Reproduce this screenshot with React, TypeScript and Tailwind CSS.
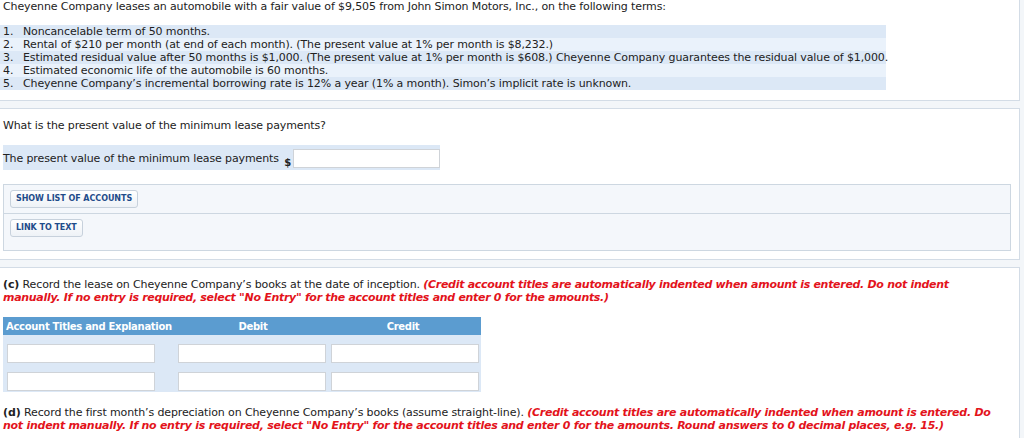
import React from "react";

const terms = [
  "Noncancelable term of 50 months.",
  "Rental of $210 per month (at end of each month). (The present value at 1% per month is $8,232.)",
  "Estimated residual value after 50 months is $1,000. (The present value at 1% per month is $608.) Cheyenne Company guarantees the residual value of $1,000.",
  "Estimated economic life of the automobile is 60 months.",
  "Cheyenne Company\u2019s incremental borrowing rate is 12% a year (1% a month). Simon\u2019s implicit rate is unknown.",
];

function Btn({ children }: { children: React.ReactNode }) {
  return (
    <button className="h-[18px] px-[5px] rounded-[3px] border border-[#c7d1dc] bg-gradient-to-b from-white to-[#eef2f7] text-[8px] font-bold text-[#1f4c8a] leading-none tracking-[-0.05px] whitespace-nowrap">
      {children}
    </button>
  );
}

function Box() {
  return <div className="h-[19px] w-[148px] bg-white border border-[#cfd3d8]" />;
}

export default function App() {
  return (
    <div className="w-[1024px] h-[438px] overflow-hidden bg-[#f3f6f9] font-['DejaVu_Sans',Verdana,sans-serif] text-[11px] text-[#222] leading-[13px] tracking-[-0.12px]">
      <div className="w-[1020px] flex flex-col gap-[7px]">
        {/* card 1 */}
        <div className="h-[101px] bg-white border-r border-b border-[#d3dce6]">
          <p className="px-[3px] pt-0 whitespace-nowrap">
            Cheyenne Company leases an automobile with a fair value of $9,505 from John Simon Motors, Inc., on the following terms:
          </p>
          <div className="mt-[12px] w-[886px]">
            {terms.map((t, i) => (
              <div
                key={i}
                className={`h-[13px] flex whitespace-nowrap ${i % 2 === 0 ? "bg-[#dce8f6]" : "bg-[#eaf2fb]"}`}
              >
                <span className="w-[23px] pl-[3px] shrink-0">{i + 1}.</span>
                <span>{t}</span>
              </div>
            ))}
          </div>
        </div>

        {/* card 2 */}
        <div className="h-[152px] bg-white border-r border-y border-[#d3dce6] pt-[10px]">
          <p className="px-[3px]">What is the present value of the minimum lease payments?</p>
          <div className="mt-[13px] ml-[3px] w-[437px] h-[25px] bg-[#dce8f6] flex items-center whitespace-nowrap">
            <span className="mt-[1px]">The present value of the minimum lease payments</span>
            <span className="ml-auto self-end mb-[1px] text-[10px] font-bold mr-[2px]">$</span>
            <input className="w-[147px] h-[19px] bg-white border border-[#cfd3d8] mt-[1px]" />
          </div>
          <div className="mt-[14px] ml-[3px] w-[1008px] h-[67px] bg-[#f4f7fb] border border-[#cdd7e1] flex flex-col">
            <div className="h-[29px] border-b border-[#cdd7e1] pl-[6px] flex items-center">
              <Btn>SHOW LIST OF ACCOUNTS</Btn>
            </div>
            <div className="pl-[6px] pt-[5px]">
              <Btn>LINK TO TEXT</Btn>
            </div>
          </div>
        </div>

        {/* card 3 */}
        <div className="h-[200px] bg-white border-r border-t border-[#d3dce6] pt-[10px] px-[3px]">
          <p className="whitespace-nowrap">
            <b>(c)</b> Record the lease on Cheyenne Company{"\u2019"}s books at the date of inception.{" "}
            <i className="font-bold text-[#e3131b] tracking-[-0.3px]">
              (Credit account titles are automatically indented when amount is entered. Do not indent
              <br />
              manually. If no entry is required, select "No Entry" for the account titles and enter 0 for the amounts.)
            </i>
          </p>
          <div className="mt-[13px] w-[478px]">
            <div className="h-[18px] bg-[#5b9cd0] text-white font-bold text-[10px] tracking-[-0.3px] flex items-center whitespace-nowrap">
              <span className="w-[175px] pl-[3px]">Account Titles and Explanation</span>
              <span className="w-[150px] text-center">Debit</span>
              <span className="w-[150px] text-center">Credit</span>
            </div>
            <div className="h-[57px] bg-[#dce8f6] pt-[9px] flex flex-col gap-[9px]">
              {[0, 1].map((r) => (
                <div key={r} className="flex pl-[4px]">
                  <Box />
                  <div className="w-[23px]" />
                  <Box />
                  <div className="w-[5px]" />
                  <Box />
                </div>
              ))}
            </div>
          </div>
          <p className="mt-[14px] whitespace-nowrap">
            <b>(d)</b> Record the first month{"\u2019"}s depreciation on Cheyenne Company{"\u2019"}s books (assume straight-line).{" "}
            <i className="font-bold text-[#e3131b] tracking-[-0.26px]">
              (Credit account titles are automatically indented when amount is entered. Do
              <br />
              not indent manually. If no entry is required, select "No Entry" for the account titles and enter 0 for the amounts. Round answers to 0 decimal places, e.g. 15.)
            </i>
          </p>
        </div>
      </div>
    </div>
  );
}
